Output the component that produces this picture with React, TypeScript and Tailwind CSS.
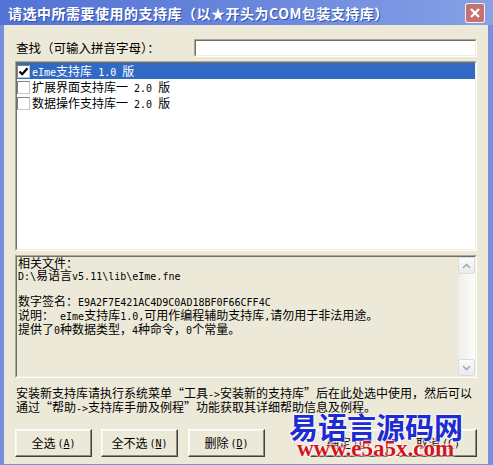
import React from 'react'

// ascii runs are drawn narrower, like the half-width glyphs of the original font
function T({ s }: { s: string }) {
  const parts = s.split(/([\x20-\x7e]+)/)
  return (
    <>
      {parts.map((p, i) =>
        i % 2 === 1 ? (
          <span key={i} className="font-['DejaVu_Sans_Mono',monospace] text-[10px]">{p}</span>
        ) : (
          <React.Fragment key={i}>{p}</React.Fragment>
        )
      )}
    </>
  )
}

function Sunken({ className, inner, children }: { className?: string; inner?: string; children?: React.ReactNode }) {
  return (
    <div className={`border border-[#aca899] border-r-white border-b-white ${className ?? ''}`}>
      <div className={`h-full border border-[#716f64] border-r-[#f1efe2] border-b-[#f1efe2] ${inner ?? ''}`}>
        {children}
      </div>
    </div>
  )
}

function Check({ checked }: { checked?: boolean }) {
  return (
    <div className="w-[13px] h-[13px] shrink-0 bg-white border border-[#808080] border-r-[#c8c6bd] border-b-[#c8c6bd] flex items-center justify-center">
      {checked && (
        <svg width="11" height="11" viewBox="0 0 11 11">
          <path d="M1.5 5.5 L4.2 8.2 L9.5 2.2" stroke="#000" strokeWidth="2.2" fill="none" />
        </svg>
      )}
    </div>
  )
}

function Btn({ label, k, w }: { label: string; k: string; w: string }) {
  return (
    <div
      className={`${w} h-full flex items-center justify-center bg-[#ece9d8] border border-t-white border-l-white border-b-[#404040] border-r-[#404040] shadow-[inset_-1px_-1px_0_#8d8b80,inset_1px_1px_0_#f7f6f1]`}
    >
      <span>{label}</span>
      <span className="font-['DejaVu_Sans_Mono',monospace] text-[10px] ml-[2px]">
        (<span className="underline">{k}</span>)
      </span>
    </div>
  )
}

export default function App() {
  return (
    <div className="relative w-[493px] h-[465px] flex flex-col bg-[#7590dc] overflow-hidden font-['Noto_Sans_CJK_SC',sans-serif] text-[12px] text-black">
      {/* title bar */}
      <div className="h-[25px] shrink-0 flex items-center pl-[8px] pr-[8px] bg-[linear-gradient(to_right,#5273d3,#6b88dd_55%,#87a1e6)]">
        <span className="text-white font-bold text-[14px] tracking-[0.5px] leading-none [text-shadow:1px_1px_0_#2f4fa8]">
          请选中所需要使用的支持库（以★开头为COM包装支持库）
        </span>
        <div className="ml-auto w-[20px] h-[20px] rounded-[3px] border border-white/90 bg-[#c5716d] flex items-center justify-center">
          <svg width="12" height="12" viewBox="0 0 12 12">
            <path d="M2 2 L10 10 M10 2 L2 10" stroke="#fff" strokeWidth="2.4" />
          </svg>
        </div>
      </div>

      {/* body */}
      <div className="flex-1 mx-[4px] mr-[5px] mb-[5px] bg-[#ece9d8] px-[11px] pt-[14px] pb-[7px] flex flex-col">
        <div className="h-[18px] flex items-center">
          <span className="text-[12.5px] leading-none pl-[1px]">查找（可输入拼音字母）：</span>
          <Sunken className="ml-auto w-[283px] h-[18px]" inner="bg-white" />
        </div>

        <Sunken className="mt-[4px] h-[190px]" inner="bg-white">
          <div className="h-[16px] flex items-center gap-[2px] bg-[#316ac5] text-white whitespace-pre">
            <Check checked />
            <span><T s="eIme支持库 1.0 版" /></span>
          </div>
          <div className="h-[16px] flex items-center gap-[2px] whitespace-pre">
            <Check />
            <span><T s="扩展界面支持库一 2.0 版" /></span>
          </div>
          <div className="h-[16px] flex items-center gap-[2px] whitespace-pre">
            <Check />
            <span><T s="数据操作支持库一 2.0 版" /></span>
          </div>
        </Sunken>

        <Sunken className="mt-[4px] h-[123px]" inner="bg-[#ece9d8] flex">
          <div className="flex-1 pl-[1px] leading-[12px] whitespace-pre">
            <div>相关文件：</div>
            <div><T s="D:\易语言v5.11\lib\eIme.fne" /></div>
            <div className="h-[12px]" />
            <div><T s="数字签名：E9A2F7E421AC4D9C0AD18BF0F66CFF4C" /></div>
            <div><T s="说明： eIme支持库1.0,可用作编程辅助支持库,请勿用于非法用途。" /></div>
            <div><T s="提供了0种数据类型，4种命令，0个常量。" /></div>
          </div>
          {/* scrollbar */}
          <div className="w-[17px] flex flex-col bg-[linear-gradient(to_right,#efeee7,#fdfdfb)]">
            <div className="h-[17px] rounded-[2px] border border-[#d9dbe2] bg-[linear-gradient(#fbfbfa,#e9eaee)] flex items-center justify-center">
              <svg width="9" height="6" viewBox="0 0 9 6">
                <path d="M1 5 L4.5 1.5 L8 5" stroke="#a3a9b8" strokeWidth="1.6" fill="none" />
              </svg>
            </div>
            <div className="flex-1" />
            <div className="h-[17px] rounded-[2px] border border-[#d9dbe2] bg-[linear-gradient(#fbfbfa,#e9eaee)] flex items-center justify-center">
              <svg width="9" height="6" viewBox="0 0 9 6">
                <path d="M1 1 L4.5 4.5 L8 1" stroke="#a3a9b8" strokeWidth="1.6" fill="none" />
              </svg>
            </div>
          </div>
        </Sunken>

        <div className="mt-[9px] leading-[12px] whitespace-pre pl-[1px]">
          <div><T s="安装新支持库请执行系统菜单“工具->安装新的支持库”后在此处选中使用，然后可以" /></div>
          <div><T s="通过“帮助->支持库手册及例程”功能获取其详细帮助信息及例程。" /></div>
        </div>

        <div className="mt-[14px] h-[28px] flex">
          <div className="flex h-full">
            <Btn label="全选" k="A" w="w-[77px]" />
            <div className="w-[9px]" />
            <Btn label="全不选" k="N" w="w-[77px]" />
            <div className="w-[10px]" />
            <Btn label="删除" k="D" w="w-[77px]" />
          </div>
          <div className="ml-auto flex h-full gap-[11px]">
            <Btn label="确定" k="O" w="w-[78px]" />
            <Btn label="取消" k="C" w="w-[78px]" />
          </div>
        </div>
      </div>

      {/* watermark */}
      <div className="absolute left-[289px] top-[411px] flex flex-col items-start pointer-events-none">
        <span className="text-[#1c2bd2] font-bold text-[29px] leading-[30px] [text-shadow:0_0_2px_#fff,0_0_2px_#fff,0_0_3px_#fff]">
          易语言源码网
        </span>
        <span className="ml-[8px] -mt-[4px] text-[#d4141c] font-bold text-[23px] leading-[24px] font-['Liberation_Serif',serif] [text-shadow:0_0_2px_#fff,0_0_2px_#fff,0_0_3px_#fff]">
          www.e5a5x.com
        </span>
      </div>
    </div>
  )
}
